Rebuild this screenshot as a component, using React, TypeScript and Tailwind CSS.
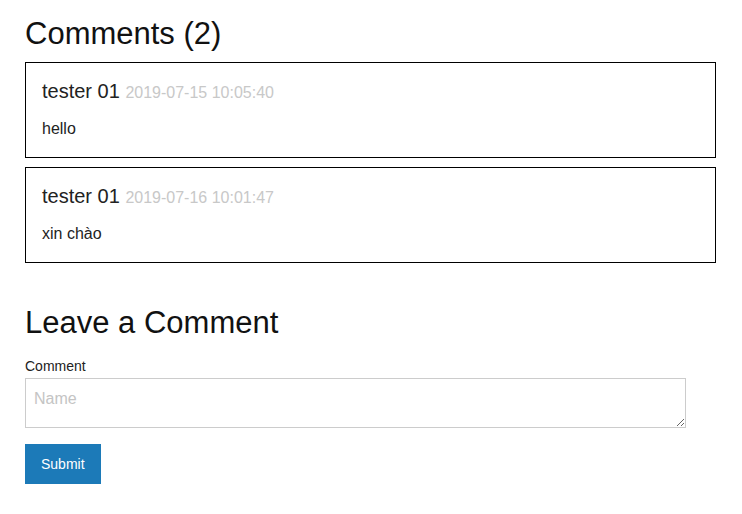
const comments = [
  { id: 1, author: "tester 01", date: "2019-07-15 10:05:40", body: "hello" },
  { id: 2, author: "tester 01", date: "2019-07-16 10:01:47", body: "xin chào" },
];

function CommentCard({ author, date, body }: { author: string; date: string; body: string }) {
  return (
    <div className="border border-black px-4 pt-4 pb-4">
      <p className="text-[20px] leading-6 text-[#222]">
        {author} <span className="text-base leading-none text-[#c8c8c8]">{date}</span>
      </p>
      <p className="mt-[14px] text-base leading-6 text-[#222]">{body}</p>
    </div>
  );
}

export default function App() {
  return (
    <div className="min-h-screen bg-white px-[25px] pt-[15px] font-['Liberation_Sans',Arial,sans-serif]">
      <div className="w-[691px]">
        <h2 className="text-[31px] leading-[1.2] text-[#111]">Comments ({comments.length})</h2>
        <div className="mt-[10px] space-y-[9px]">
          {comments.map((c) => (
            <CommentCard key={c.id} author={c.author} date={c.date} body={c.body} />
          ))}
        </div>

        <h2 className="mt-[41px] text-[31px] leading-[1.2] text-[#111]">Leave a Comment</h2>
        <form className="mt-[15px]" onSubmit={(e) => e.preventDefault()}>
          <label className="block text-sm leading-[21px] text-[#222]">Comment</label>
          <textarea
            placeholder="Name"
            className="mt-px block h-[50px] w-[661px] border border-[#cccccc] px-2 pt-2 pb-1 text-base leading-6 text-[#222] placeholder:text-[#c4c4c4] focus:outline-none"
          />
          <button
            type="submit"
            className="mt-4 h-10 bg-[#1c7ab8] px-4 text-sm text-white"
          >
            Submit
          </button>
        </form>
      </div>
    </div>
  );
}
